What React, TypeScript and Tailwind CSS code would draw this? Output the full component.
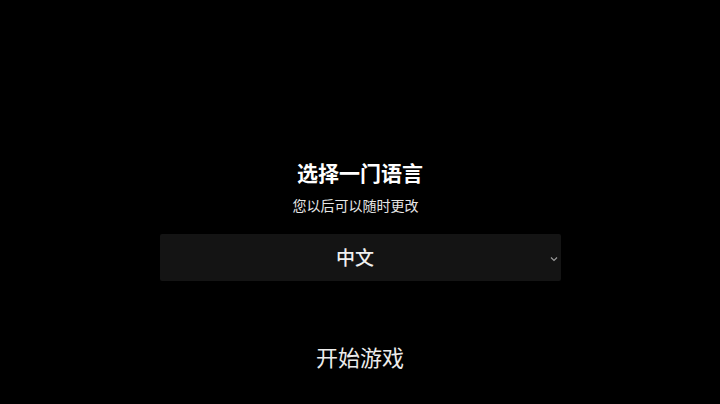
import { useState } from "react";

export default function App() {
  const [lang, setLang] = useState("zh");

  return (
    <main
      className="w-full h-[404px] bg-black flex flex-col items-center pt-[158px] text-white"
      style={{ fontFamily: '"Noto Sans CJK SC", "Noto Sans", sans-serif' }}
    >
      <h1 className="text-[21px] leading-[28px] font-bold">选择一门语言</h1>
      <p className="mt-[9px] pr-[9px] text-[14px] leading-[20px] text-[#e6e6e6]">您以后可以随时更改</p>

      <div className="relative mt-[19px] w-[401px] h-[47px] bg-[#141414] rounded-[2px]">
        <select
          value={lang}
          onChange={(e) => setLang(e.target.value)}
          className="w-full h-full appearance-none bg-transparent text-center pr-[10px] text-[19px] font-medium text-[#f0f0f0] outline-none"
        >
          <option value="zh">中文</option>
          <option value="en">English</option>
        </select>
        <svg
          className="absolute right-[3px] top-[22px] w-[8px] h-[6px] pointer-events-none"
          viewBox="0 0 8 6"
          fill="none"
        >
          <path d="M1 1.5 L4 4.5 L7 1.5" stroke="#9a9a9a" strokeWidth="1.2" />
        </svg>
      </div>

      <button className="mt-[60px] text-[22px] leading-[30px] text-[#ececec]">开始游戏</button>
    </main>
  );
}
